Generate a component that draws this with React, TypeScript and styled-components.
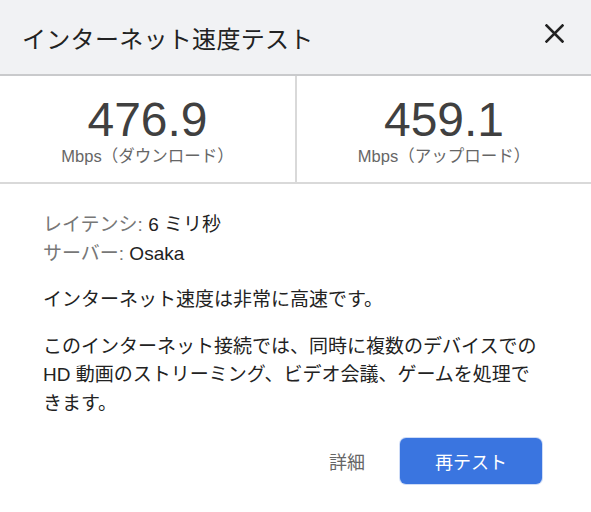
import React from 'react';
import styled, { createGlobalStyle } from 'styled-components';

const GlobalStyle = createGlobalStyle`
  html, body {
    margin: 0;
    padding: 0;
    background: #ffffff;
  }
  body {
    font-family: "Liberation Sans", "Noto Sans CJK JP", sans-serif;
    color: #222;
  }
`;

const Dialog = styled.div`
  width: 591px;
  height: 512px;
  background: #fff;
  display: flex;
  flex-direction: column;
`;

const Header = styled.div`
  height: 74px;
  background: #f1f2f4;
  border-bottom: 2px solid #c9cacc;
  display: flex;
  align-items: center;
  justify-content: space-between;
  padding: 0 27px 0 22px;
`;

const Title = styled.h1`
  margin: 0;
  font-size: 24px;
  font-weight: 400;
  color: #222;
  letter-spacing: 0.3px;
`;

const CloseButton = styled.button`
  border: none;
  background: none;
  padding: 0;
  margin-bottom: 7px;
  width: 20px;
  height: 20px;
  display: flex;
  align-items: center;
  justify-content: center;
  cursor: pointer;
`;

const Stats = styled.div`
  height: 106px;
  display: grid;
  grid-template-columns: 297px 1fr;
  border-bottom: 2px solid #d9d9d9;
`;

const Stat = styled.div<{ $divider?: boolean }>`
  display: flex;
  flex-direction: column;
  align-items: center;
  padding-top: 22px;
  border-right: ${p => (p.$divider ? '2px solid #d9d9d9' : 'none')};
`;

const Value = styled.div`
  font-size: 48px;
  line-height: 44px;
  color: #404040;
`;

const Unit = styled.div`
  margin-top: 1px;
  font-size: 16.5px;
  color: #666;
`;

const Body = styled.div`
  padding: 27px 49px 0 43px;
  font-size: 19px;
  line-height: 28.5px;
  color: #222;
`;

const InfoLine = styled.div`
  color: #222;
`;

const Label = styled.span`
  color: #777;
`;

const Paragraph = styled.p`
  margin: 18px 0 0;
  color: #222;
`;

const Actions = styled.div`
  display: flex;
  justify-content: flex-end;
  align-items: center;
  gap: 35px;
  margin-top: 20px;
`;

const TextButton = styled.button`
  border: none;
  background: none;
  font-family: inherit;
  font-size: 18px;
  color: #666;
  padding: 0;
  cursor: pointer;
`;

const PrimaryButton = styled.button`
  width: 142px;
  height: 46px;
  border: none;
  border-radius: 6px;
  background: #3a75e0;
  color: #fff;
  font-family: inherit;
  font-size: 18px;
  cursor: pointer;
  box-shadow: 0 0 0 1px rgba(58, 117, 224, 0.25);
`;

export default function App() {
  return (
    <>
      <GlobalStyle />
      <Dialog>
        <Header>
          <Title>インターネット速度テスト</Title>
          <CloseButton aria-label="閉じる">
            <svg width="19" height="19" viewBox="0 0 19 19">
              <path d="M1.5 1.5 L17.5 17.5 M17.5 1.5 L1.5 17.5" stroke="#222" strokeWidth="2.6" strokeLinecap="square" />
            </svg>
          </CloseButton>
        </Header>
        <Stats>
          <Stat $divider>
            <Value>476.9</Value>
            <Unit>Mbps（ダウンロード）</Unit>
          </Stat>
          <Stat>
            <Value>459.1</Value>
            <Unit>Mbps（アップロード）</Unit>
          </Stat>
        </Stats>
        <Body>
          <InfoLine><Label>レイテンシ:</Label> 6 ミリ秒</InfoLine>
          <InfoLine><Label>サーバー:</Label> Osaka</InfoLine>
          <Paragraph>インターネット速度は非常に高速です。</Paragraph>
          <Paragraph>
            このインターネット接続では、同時に複数のデバイスでの<br />
            HD 動画のストリーミング、ビデオ会議、ゲームを処理で<br />
            きます。
          </Paragraph>
          <Actions>
            <TextButton>詳細</TextButton>
            <PrimaryButton>再テスト</PrimaryButton>
          </Actions>
        </Body>
      </Dialog>
    </>
  );
}
